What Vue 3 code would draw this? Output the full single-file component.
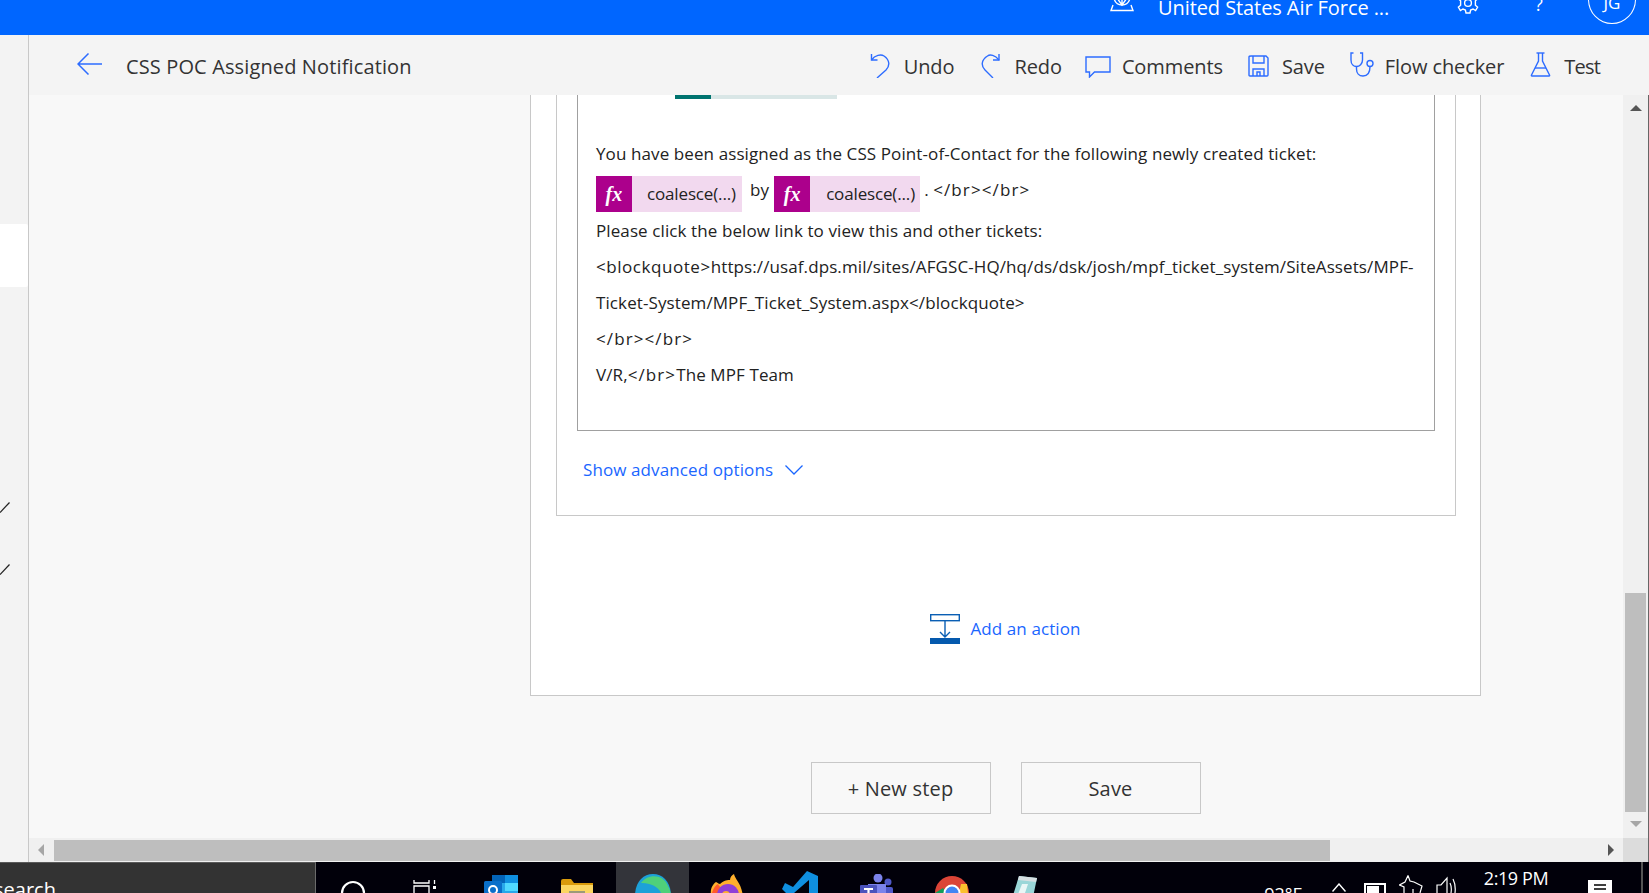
<template>
  <div class="page">
    <header class="topbar">
      <svg class="org-icon" width="24" height="12" viewBox="0 0 24 12" fill="none" stroke="#fff" stroke-width="1.4">
        <path d="M4 -2 C5 3 8 5 12 5 C16 5 19 3 20 -2" />
        <path d="M12 -3 V5 M7 -2 L12 5 L17 -2" />
        <path d="M3 5 L1 10.5 H23 L21 5" />
      </svg>
      <span class="org-name">United States Air Force ...</span>
      <svg class="gear" width="22" height="22" viewBox="0 0 22 22" fill="none" stroke="#fff" stroke-width="1.4">
        <circle cx="11" cy="11" r="3.4" />
        <path d="M9 1 H13 L13.6 4 L16 5 L18.6 3.4 L20.6 6.8 L18.4 8.8 V13.2 L20.6 15.2 L18.6 18.6 L16 17 L13.6 18 L13 21 H9 L8.4 18 L6 17 L3.4 18.6 L1.4 15.2 L3.6 13.2 V8.8 L1.4 6.8 L3.4 3.4 L6 5 L8.4 4 Z" />
      </svg>
      <span class="help">?</span>
      <span class="avatar">JG</span>
    </header>

    <div class="body">
      <aside class="rail">
        <div class="rail-active"></div>
        <svg class="tick tick-first" width="10" height="11" viewBox="0 0 10 11"><path d="M0 10.5 L9.5 0.5" stroke="#222" stroke-width="1.2" /></svg>
        <svg class="tick tick-second" width="10" height="11" viewBox="0 0 10 11"><path d="M0 10.5 L9.5 0.5" stroke="#222" stroke-width="1.2" /></svg>
      </aside>

      <main class="main">
        <div class="toolbar">
          <svg class="back" width="25" height="22" viewBox="0 0 25 22" fill="none" stroke="#2d6cff" stroke-width="1.5">
            <path d="M25 11 H1.5 M11.5 0.5 L1 11 L11.5 21.5" />
          </svg>
          <span class="flow-title">CSS POC Assigned Notification</span>
          <div class="actions">
            <button v-for="a in actions" :key="a.label" class="action">
              <svg :width="a.w" height="26" :viewBox="`0 0 ${a.w} 26`" fill="none" stroke="#2d6cff" stroke-width="1.4" v-html="a.icon"></svg>
              <span>{{ a.label }}</span>
            </button>
          </div>
        </div>

        <div class="workspace">
          <div class="canvas">
            <section class="outer-card">
              <div class="inner-card">
                <div class="editor">
                  <div class="tab-line"><i class="tab-on"></i><i class="tab-off"></i></div>
                  <p class="line">You have been assigned as the CSS Point-of-Contact for the following newly created ticket:</p>
                  <div class="line token-line">
                    <span class="token"><b class="fx">fx</b><span class="token-name">coalesce(...)</span></span>
                    <span class="by">by</span>
                    <span class="token"><b class="fx">fx</b><span class="token-name wide">coalesce(...)</span></span>
                    <span class="tail">. <span class="tags">&lt;/br&gt;&lt;/br&gt;</span></span>
                  </div>
                  <p class="line">Please click the below link to view this and other tickets:</p>
                  <p class="line"><span class="quote">&lt;blockquote&gt;</span>https://usaf.dps.mil/sites/AFGSC-HQ/hq/ds/dsk/josh/mpf_ticket_system/SiteAssets/MPF-</p>
                  <p class="line">Ticket-System/MPF_Ticket_System.aspx&lt;/blockquote&gt;</p>
                  <p class="line"><span class="tags">&lt;/br&gt;&lt;/br&gt;</span></p>
                  <p class="line">V/R,<span class="tags">&lt;/br&gt;</span>The MPF Team</p>
                </div>
                <div class="advanced">
                  <span>Show advanced options</span>
                  <svg width="18" height="10" viewBox="0 0 18 10" fill="none" stroke="#1a66ff" stroke-width="1.3"><path d="M0.5 0.5 L9 9 L17.5 0.5" /></svg>
                </div>
              </div>
              <div class="add-action">
                <svg width="30" height="30" viewBox="0 0 30 30" fill="none" stroke="#0a5fb4" stroke-width="1.4">
                  <rect x="0.7" y="0.7" width="28.6" height="6" />
                  <path d="M15 7 V22.5 M10 18 L15 23 L20 18" />
                  <rect x="0" y="24" width="30" height="6" fill="#0559ad" stroke="none" />
                </svg>
                <span>Add an action</span>
              </div>
            </section>
            <div class="steps">
              <button class="step">+ New step</button>
              <button class="step">Save</button>
            </div>
          </div>
          <div class="vscroll">
            <i class="arrow-up"></i>
            <i class="vthumb"></i>
            <i class="arrow-down"></i>
          </div>
        </div>

        <div class="hscroll">
          <i class="arrow-left"></i>
          <i class="hthumb"></i>
          <i class="arrow-right"></i>
          <i class="corner"></i>
        </div>
      </main>
    </div>

    <footer class="taskbar">
      <div class="searchbox"><span>search</span></div>
      <div class="tile">
        <svg class="nudge-1" width="26" height="26" viewBox="0 0 26 26" fill="none" stroke="#fff" stroke-width="2.2"><circle cx="13" cy="13" r="11" /></svg>
      </div>
      <div class="tile">
        <svg class="taskview" width="24" height="24" viewBox="0 0 24 24" fill="none" stroke="#fff" stroke-width="1.3">
          <path d="M1 1 V4 H16 V1 M1 7 H16 V24 H1 Z" />
          <path d="M21.5 1 V5" /><rect x="20" y="7" width="3" height="3" fill="#fff" stroke="none" />
        </svg>
      </div>
      <div class="tile">
        <svg class="outlook" width="34" height="26" viewBox="0 0 34 26">
          <rect x="8" y="0" width="26" height="26" rx="2" fill="#28a8ea" />
          <rect x="8" y="0" width="13" height="8" fill="#0364b8" />
          <rect x="21" y="0" width="13" height="8" fill="#0f8fe0" />
          <rect x="21" y="8" width="13" height="8" fill="#50d9ff" />
          <rect x="0" y="6" width="18" height="20" rx="1.5" fill="#0a6fc9" />
          <circle cx="9" cy="15" r="4" fill="none" stroke="#fff" stroke-width="2" />
        </svg>
      </div>
      <div class="tile">
        <svg class="folder" width="32" height="22" viewBox="0 0 32 22">
          <path d="M0 2 Q0 0 2 0 H10 L13 4 H32 V22 H0 Z" fill="#d99a0b" />
          <rect x="0" y="6" width="32" height="16" fill="#fbd661" />
          <rect x="8" y="12" width="16" height="10" fill="#9c9a78" />
        </svg>
      </div>
      <div class="tile tile-active">
        <svg class="edge" width="36" height="26" viewBox="0 0 36 26">
          <path d="M0 22 C0 8 8 0 18 0 C28 0 36 8 36 22 Z" fill="#1da1d8" />
          <path d="M6 9 C12 0 28 -1 33 12 C36 17 36 22 36 26 H26 C30 14 14 8 6 9 Z" fill="#4fd07a" />
          <path d="M12 26 C12 19 24 16 26 26 Z" fill="#0b1030" />
        </svg>
      </div>
      <div class="tile">
        <svg class="firefox" width="33" height="26" viewBox="0 0 33 26">
          <path d="M2 26 C-1 16 2 11 6 8 C8 9 9 10 10 10 C14 6 18 6 20 6 C20 3 22 1 24 0 C25 6 33 10 33 26 Z" fill="#ffb02e" />
          <path d="M1 26 C1 18 5 11 8 10 C9 13 12 13 13 16 C9 18 8 22 10 26 Z" fill="#ff5a2c" />
          <circle cx="18" cy="21" r="11" fill="#8f3fd8" />
          <circle cx="16" cy="21" r="4" fill="#ffb02e" />
        </svg>
      </div>
      <div class="tile">
        <svg class="vscode" width="36" height="26" viewBox="0 0 36 26" fill="#0f8fe0">
          <path d="M25 0 L36 5 V26 H27 V9 L12 22 L16 26 H8 L0 18 L3 12 L11 16 Z" />
        </svg>
      </div>
      <div class="tile">
        <svg class="teams" width="34" height="26" viewBox="0 0 34 26">
          <circle cx="18" cy="4" r="4.5" fill="#7b83eb" />
          <circle cx="28" cy="8" r="3.5" fill="#5059c9" />
          <rect x="20" y="13" width="13" height="13" rx="2" fill="#5059c9" />
          <rect x="8" y="10" width="18" height="16" fill="#7b83eb" />
          <rect x="0" y="11" width="17" height="15" rx="1" fill="#4b53bc" />
          <path d="M4 15 H13 M8.5 15 V26" stroke="#fff" stroke-width="2.2" />
        </svg>
      </div>
      <div class="tile">
        <svg class="chrome" width="34" height="26" viewBox="0 0 34 26">
          <circle cx="17" cy="17" r="17" fill="#db4437" />
          <path d="M3 26 L0 17 L8 12 L17 26 Z" fill="#0f9d58" />
          <path d="M26 8 H32 L34 26 H22 Z" fill="#fbc02d" />
          <circle cx="17" cy="17" r="8.5" fill="#fff" />
          <circle cx="17" cy="17" r="6.5" fill="#4285f4" />
        </svg>
      </div>
      <div class="tile">
        <svg class="notepad" width="28" height="28" viewBox="0 0 28 28">
          <path d="M9 2 L27 4 L22 28 H1 Z" fill="#9ad6d8" />
          <path d="M9 2 L27 4 L26 8 L8 6 Z" fill="#d6dfe2" />
          <path d="M12 10 L5 28 H12 L18 10 Z" fill="#e9f6f6" />
        </svg>
      </div>

      <div class="tray">
        <span class="temp">92°F</span>
        <div class="tray-icon">
          <svg width="14" height="9" viewBox="0 0 14 9" fill="none" stroke="#fff" stroke-width="1.4"><path d="M0.5 8.5 L7 1 L13.5 8.5" /></svg>
        </div>
        <div class="tray-icon">
          <svg width="22" height="14" viewBox="0 0 22 14"><rect x="1" y="1" width="20" height="13" fill="none" stroke="#fff" stroke-width="2" /><rect x="3" y="3" width="12" height="11" fill="#fff" /></svg>
        </div>
        <div class="tray-icon up">
          <svg width="24" height="18" viewBox="0 0 24 18" fill="none" stroke="#fff" stroke-width="1.2"><path d="M9 0.5 L11 6 L15 7 L23 11 L21 18 M9 0.5 L6 7 L0.5 10 L5 12 V18 M14 18 V14" /></svg>
        </div>
        <div class="tray-icon up">
          <svg width="22" height="18" viewBox="0 0 22 18" fill="none" stroke="#fff" stroke-width="1.2"><path d="M1 18 V10 H5 L11 3 V18 M14 8 Q16 12 15 18 M17 4 Q20 10 19 18" /></svg>
        </div>
        <div class="clock">2:19 PM</div>
        <div class="notif">
          <svg width="24" height="14" viewBox="0 0 24 14"><path d="M0 0 H24 V14 H0 Z" fill="#fff" /><path d="M6 5 H18 M6 9 H18" stroke="#000" stroke-width="1.4" /></svg>
        </div>
        <i class="edge-line"></i>
      </div>
    </footer>
  </div>
</template>

<script setup>
const actions = [
  {
    label: 'Undo',
    w: 22,
    icon: '<path d="M2.5 2 V8 H8.5" /><path d="M2.5 8 C6 3 12 2 15 4 C21 8 21 14 17 18 L8 26" />'
  },
  {
    label: 'Redo',
    w: 20,
    icon: '<path d="M18 2 V8 H12" /><path d="M18 8 C14 3 9 2 6.5 4 C0 8 0 14 4 18 L12 26" />'
  },
  {
    label: 'Comments',
    w: 26,
    icon: '<path d="M1 5 H25 V20 H9.5 L4.5 25 V20 H1 Z" />'
  },
  {
    label: 'Save',
    w: 21,
    icon: '<path d="M3 4 H18 L20 6 V23 Q20 24 19 24 H2 Q1 24 1 23 V5 Q1 4 3 4 Z" /><path d="M5 4 V11 H16 V4" /><path d="M5 24 V17 H16 V24 M9 24 V20 H12 V24" />'
  },
  {
    label: 'Flow checker',
    w: 24,
    icon: '<path d="M3.5 1 H1 V8 C1 12 3.5 14.5 6.5 14.5 C9.5 14.5 12.5 12 12.5 8 V1 H10" /><path d="M6.5 14.5 V17 C6.5 21 9 24 13 24 C18 24 20 20 20 14.5" /><circle cx="20" cy="11.5" r="3" />'
  },
  {
    label: 'Test',
    w: 21,
    icon: '<path d="M6.5 1 H14.5" /><path d="M8.5 1 V9 L1.5 23 Q1 24 2 24 H19 Q20 24 19.5 23 L12.5 9 V1" /><path d="M5 16 H16" />'
  }
]
</script>

<style>
html,
body {
  margin: 0;
  overflow: hidden;
}
</style>

<style scoped>
.page {
  width: 1649px;
  height: 893px;
  display: flex;
  flex-direction: column;
  overflow: hidden;
  font-family: "Open Sans", "Noto Sans", sans-serif;
  color: #333;
  background: #f8f8f8;
}

/* top bar, its content runs off the top of the window */
.topbar {
  height: 35px;
  flex: none;
  background: #0066ff;
  color: #fff;
  display: flex;
  align-items: flex-start;
  overflow: hidden;
}
.org-icon {
  margin: 0 0 0 1110px;
  overflow: visible;
}
.org-name {
  margin: -5px 0 0 24px;
  width: 232px;
  font-size: 20px;
  letter-spacing: -0.08px;
  line-height: 26px;
  white-space: nowrap;
}
.gear {
  margin: -8px 0 0 67px;
}
.help {
  margin: -8px 0 0 56px;
  width: 12px;
  font-size: 18px;
  line-height: 24px;
}
.avatar {
  margin: -25px 0 0 41px;
  width: 46px;
  height: 41px;
  border: 1px solid #fff;
  border-radius: 50%;
  display: flex;
  align-items: center;
  justify-content: center;
  padding-top: 6px;
  box-sizing: content-box;
  font-size: 17px;
}

.body {
  flex: 1;
  display: flex;
  min-height: 0;
}

.rail {
  width: 28px;
  flex: none;
  background: #f3f3f3;
  border-right: 1px solid #c8c8c8;
  display: flex;
  flex-direction: column;
}
.rail-active {
  margin-top: 189px;
  height: 63px;
  background: #fff;
  border-radius: 0 2px 2px 0;
}
.tick {
  display: block;
}
.tick-first {
  margin-top: 215px;
}
.tick-second {
  margin-top: 51px;
}

.main {
  flex: 1;
  display: flex;
  flex-direction: column;
  min-width: 0;
}

.toolbar {
  height: 60px;
  flex: none;
  background: #f4f4f4;
  display: flex;
  align-items: center;
  padding: 0 49px 0 48px;
  line-height: 30px;
}
.back {
  margin-top: -2px;
}
.flow-title {
  margin: 3px 0 0 24px;
  font-size: 20px;
  letter-spacing: 0.13px;
  white-space: nowrap;
}
.actions {
  margin-left: auto;
  display: flex;
}
.action {
  display: flex;
  align-items: center;
  gap: 13px;
  padding: 0;
  border: 0;
  background: none;
  font: inherit;
  font-size: 20px;
  letter-spacing: -0.1px;
  color: #333;
  white-space: nowrap;
}
.action span {
  margin-top: 3px;
}
.action:nth-child(2) {
  margin-left: 27px;
}
.action:nth-child(3) {
  margin-left: 23px;
  gap: 11px;
}
.action:nth-child(4) {
  margin-left: 25px;
}
.action:nth-child(5) {
  margin-left: 25px;
  gap: 11px;
}
.action:nth-child(6) {
  margin-left: 26px;
  letter-spacing: -0.8px;
}

.workspace {
  flex: 1;
  display: flex;
  min-height: 0;
}
.canvas {
  flex: 1;
  padding-left: 501px;
  overflow: hidden;
}

.outer-card {
  width: 951px;
  height: 601px;
  box-sizing: border-box;
  padding-left: 25px;
  background: #fff;
  border: 1px solid #c8c8c8;
  border-top: 0;
}
.inner-card {
  width: 900px;
  height: 421px;
  box-sizing: border-box;
  padding-left: 20px;
  border: 1px solid #c8c8c8;
  border-top: 0;
}
.editor {
  width: 858px;
  height: 336px;
  box-sizing: border-box;
  padding-left: 18px;
  border: 1px solid #a0a0a0;
  border-top: 0;
}
.tab-line {
  display: flex;
  height: 4px;
  margin: 0 0 36px 79px;
}
.tab-on {
  width: 36px;
  background: #00736f;
}
.tab-off {
  width: 126px;
  background: #d9e6e6;
}
.line {
  margin: 0;
  height: 36px;
  font-size: 17px;
  line-height: 38px;
  letter-spacing: 0.1px;
  color: #222;
  white-space: nowrap;
}
.tags {
  letter-spacing: 1.1px;
}
.quote {
  letter-spacing: 0.55px;
}
.token-line {
  display: flex;
  align-items: center;
  height: 36px;
  margin-top: 5px;
}
.token {
  display: flex;
  width: 146px;
  height: 36px;
  align-items: center;
  background: #f2d9ef;
}
.fx {
  width: 36px;
  height: 36px;
  flex: none;
  display: flex;
  align-items: center;
  justify-content: center;
  background: #ac008c;
  color: #fff;
  font-family: "Liberation Serif", serif;
  font-style: italic;
  font-size: 20px;
}
.token-name {
  margin-left: 15px;
  letter-spacing: -0.15px;
}
.token-name.wide {
  margin-left: 16px;
}
.by {
  margin: -9px 5px 0 8px;
}
.tail {
  margin: -9px 0 0 4px;
}

.advanced {
  display: flex;
  align-items: center;
  gap: 12px;
  margin: 27px 0 0 6px;
  font-size: 17px;
  line-height: 24px;
  letter-spacing: 0.1px;
  color: #1a66ff;
}
.add-action {
  display: flex;
  align-items: center;
  justify-content: center;
  gap: 10px;
  margin: 98px 25px 0 0;
  font-size: 17px;
  letter-spacing: 0.1px;
  color: #1a66ff;
}
.add-action span {
  margin-top: -2px;
}

.steps {
  width: 951px;
  display: flex;
  justify-content: center;
  gap: 30px;
  margin-top: 66px;
}
.step {
  width: 180px;
  height: 52px;
  padding-top: 1px;
  background: #f8f8f8;
  border: 1px solid #c8c8c8;
  font: inherit;
  font-size: 20px;
  letter-spacing: 0.2px;
  color: #333;
}

.vscroll {
  width: 25px;
  flex: none;
  background: #f0f0f0;
  border-right: 1px solid #666;
  display: flex;
  flex-direction: column;
  align-items: center;
}
.vthumb {
  width: 21px;
  height: 219px;
  margin-top: 482px;
  background: #bebebe;
}
.arrow-up,
.arrow-down {
  width: 0;
  height: 0;
  border-left: 6px solid transparent;
  border-right: 6px solid transparent;
}
.arrow-up {
  margin-top: 10px;
  border-bottom: 6px solid #555;
}
.arrow-down {
  margin-top: 9px;
  border-top: 6px solid #a6a6a6;
}

.hscroll {
  height: 24px;
  flex: none;
  display: flex;
  align-items: center;
  background: #f0f0f0;
}
.arrow-left,
.arrow-right {
  width: 0;
  height: 0;
  border-top: 6px solid transparent;
  border-bottom: 6px solid transparent;
}
.arrow-left {
  margin-left: 9px;
  border-right: 6px solid #a6a6a6;
}
.hthumb {
  width: 1276px;
  height: 21px;
  margin-left: 10px;
  background: #bebebe;
}
.arrow-right {
  margin-left: 278px;
  border-left: 6px solid #555;
}
.corner {
  align-self: stretch;
  width: 25px;
  margin-left: auto;
  background: #dcdcdc;
  border-right: 1px solid #666;
}

.taskbar {
  height: 31px;
  flex: none;
  display: flex;
  background: #01000a;
  overflow: hidden;
  color: #fff;
}
.searchbox {
  width: 315px;
  flex: none;
  background: #333;
  border-top: 1px solid #5a5a5a;
  border-right: 1px solid #6b6b6b;
  font-size: 20px;
  overflow: hidden;
}
.searchbox span {
  display: block;
  margin: 15px 0 0 -6px;
  line-height: 24px;
}
.tile {
  width: 75px;
  flex: none;
  display: flex;
  justify-content: center;
  padding-top: 18px;
  height: 60px;
  box-sizing: border-box;
}
.tile-active {
  width: 73px;
  background: #33343a;
}
/* small offsets so each cut-off icon sits where the reference has it */
.nudge-1 {
  margin-left: -1px;
}
.taskview {
  margin: -1px 0 0 -8px;
}
.outlook {
  margin: -5px 0 0 -6px;
}
.folder {
  margin: -1px 0 0 -4px;
}
.edge {
  margin-top: -6px;
}
.firefox {
  margin-top: -6px;
}
.vscode {
  margin: -9px 0 0 -3px;
}
.teams {
  margin-top: -6px;
}
.chrome {
  margin: -4px 0 0 1px;
}
.notepad {
  margin: -6px 0 0 -5px;
}

.tray {
  margin-left: auto;
  display: flex;
  position: relative;
  padding-right: 16px;
}
.temp {
  width: 76px;
  text-align: center;
  font-size: 18px;
  line-height: 24px;
  padding-top: 20px;
}
.tray-icon {
  width: 36px;
  display: flex;
  justify-content: center;
  padding-top: 21px;
}
.tray-icon.up {
  padding-top: 13px;
}
.clock {
  width: 102px;
  text-align: center;
  font-size: 18px;
  letter-spacing: -0.4px;
  line-height: 24px;
  margin-top: 4px;
}
.notif {
  width: 66px;
  display: flex;
  justify-content: center;
  padding-top: 18px;
}
.edge-line {
  position: absolute;
  right: 6px;
  top: 0;
  width: 2px;
  height: 31px;
  background: #555;
}
</style>
